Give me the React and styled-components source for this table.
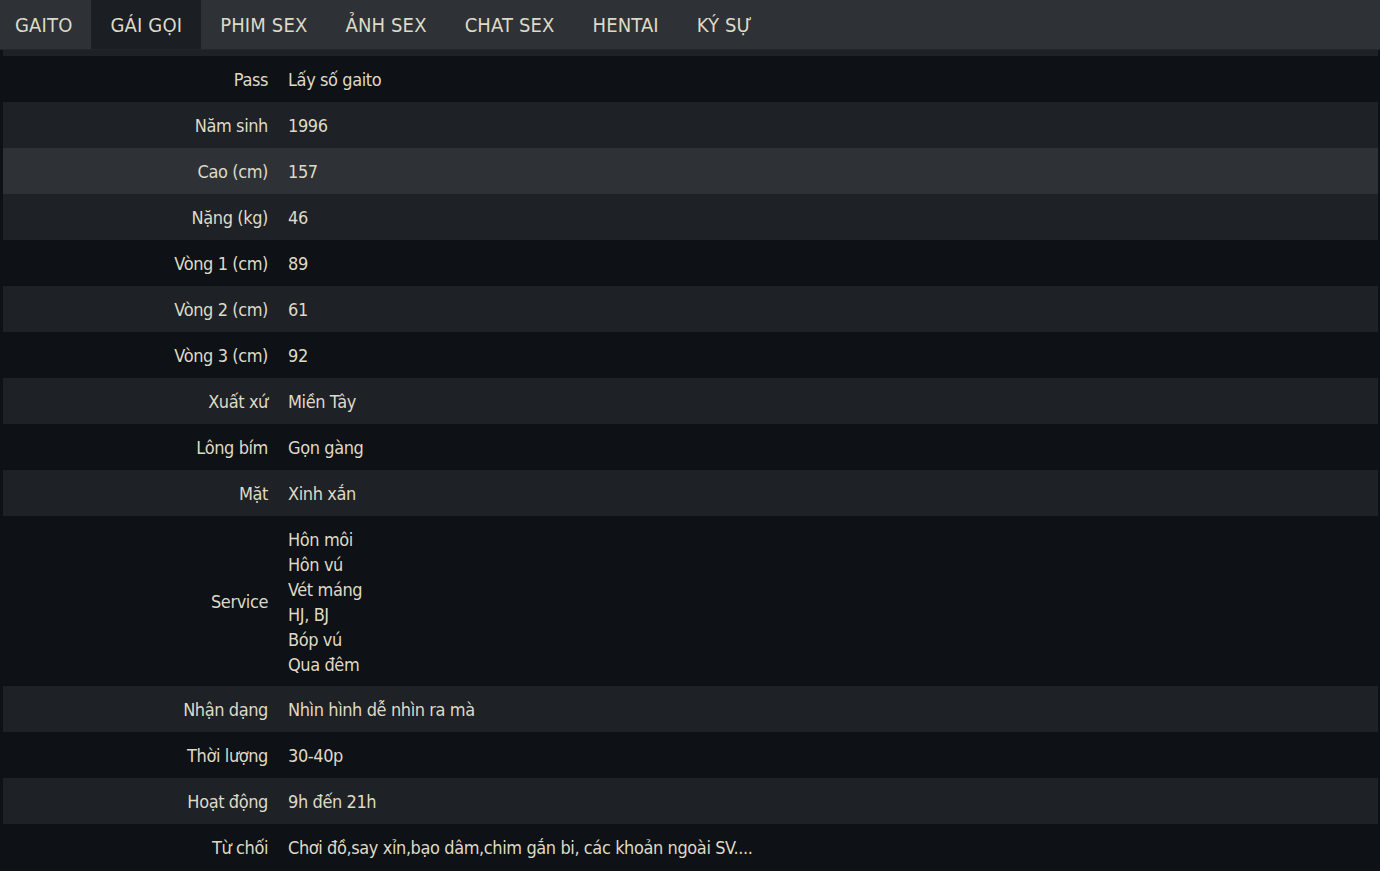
import React from "react";
import styled, { createGlobalStyle } from "styled-components";

const GlobalStyle = createGlobalStyle`
  body {
    margin: 0;
    background-color: #0e1115;
    color: #dedac6;
    font-family: "DejaVu Sans Condensed", "DejaVu Sans", Tahoma, sans-serif;
    font-stretch: condensed;
  }
`;

const NavBar = styled.nav`
  display: flex;
  align-items: stretch;
  height: 49px;
  background-color: #2e3236;
  border-bottom: 1px solid #23262a;
`;

const NavItem = styled.a`
  display: flex;
  align-items: center;
  padding: 0 19px 0 ${(p) => (p.brand ? "15px" : "19px")};
  font-size: 20px;
  letter-spacing: 0.15px;
  color: #dedac6;
  text-decoration: none;
  background-color: ${(p) => (p.active ? "#1b1e22" : "transparent")};
  cursor: pointer;
`;

const Content = styled.div`
  margin: 0 2px 0 3px;
`;

const TopStrip = styled.div`
  height: 6px;
  background-color: #1e2125;
`;

const InfoTable = styled.div`
  display: flex;
  flex-direction: column;
`;

const Row = styled.div`
  display: grid;
  grid-template-columns: 275px 1fr;
  background-color: ${(p) => (p.hover ? "#2e3236" : p.odd ? "#1e2125" : "transparent")};
  font-size: 18px;
  letter-spacing: -0.4px;
`;

const Label = styled.div`
  display: flex;
  align-items: center;
  justify-content: flex-end;
  padding: 11px 10px 9px;
  line-height: 26px;
`;

const Value = styled.div`
  padding: 11px 10px 9px;
  line-height: 26px;
`;

const ServiceList = styled.div`
  display: flex;
  flex-direction: column;

  span {
    line-height: 25px;
  }
`;

const menu = ["GÁI GỌI", "PHIM SEX", "ẢNH SEX", "CHAT SEX", "HENTAI", "KÝ SỰ"];

const rows = [
  ["Pass", "Lấy số gaito"],
  ["Năm sinh", "1996"],
  ["Cao (cm)", "157"],
  ["Nặng (kg)", "46"],
  ["Vòng 1 (cm)", "89"],
  ["Vòng 2 (cm)", "61"],
  ["Vòng 3 (cm)", "92"],
  ["Xuất xứ", "Miền Tây"],
  ["Lông bím", "Gọn gàng"],
  ["Mặt", "Xinh xắn"],
  ["Service", ["Hôn môi", "Hôn vú", "Vét máng", "HJ, BJ", "Bóp vú", "Qua đêm"]],
  ["Nhận dạng", "Nhìn hình dễ nhìn ra mà"],
  ["Thời lượng", "30-40p"],
  ["Hoạt động", "9h đến 21h"],
  ["Từ chối", "Chơi đồ,say xỉn,bạo dâm,chim gắn bi, các khoản ngoài SV...."],
];

export default function App() {
  return (
    <>
      <GlobalStyle />
      <NavBar>
        <NavItem brand>GAITO</NavItem>
        {menu.map((m, i) => (
          <NavItem key={m} active={i === 0}>
            {m}
          </NavItem>
        ))}
      </NavBar>
      <Content>
        <TopStrip />
        <InfoTable>
          {rows.map(([label, value], i) => (
            <Row key={label} odd={i % 2 === 1} hover={i === 2}>
              <Label>{label}</Label>
              <Value>
                {Array.isArray(value) ? (
                  <ServiceList>
                    {value.map((v) => (
                      <span key={v}>{v}</span>
                    ))}
                  </ServiceList>
                ) : (
                  value
                )}
              </Value>
            </Row>
          ))}
        </InfoTable>
      </Content>
    </>
  );
}
